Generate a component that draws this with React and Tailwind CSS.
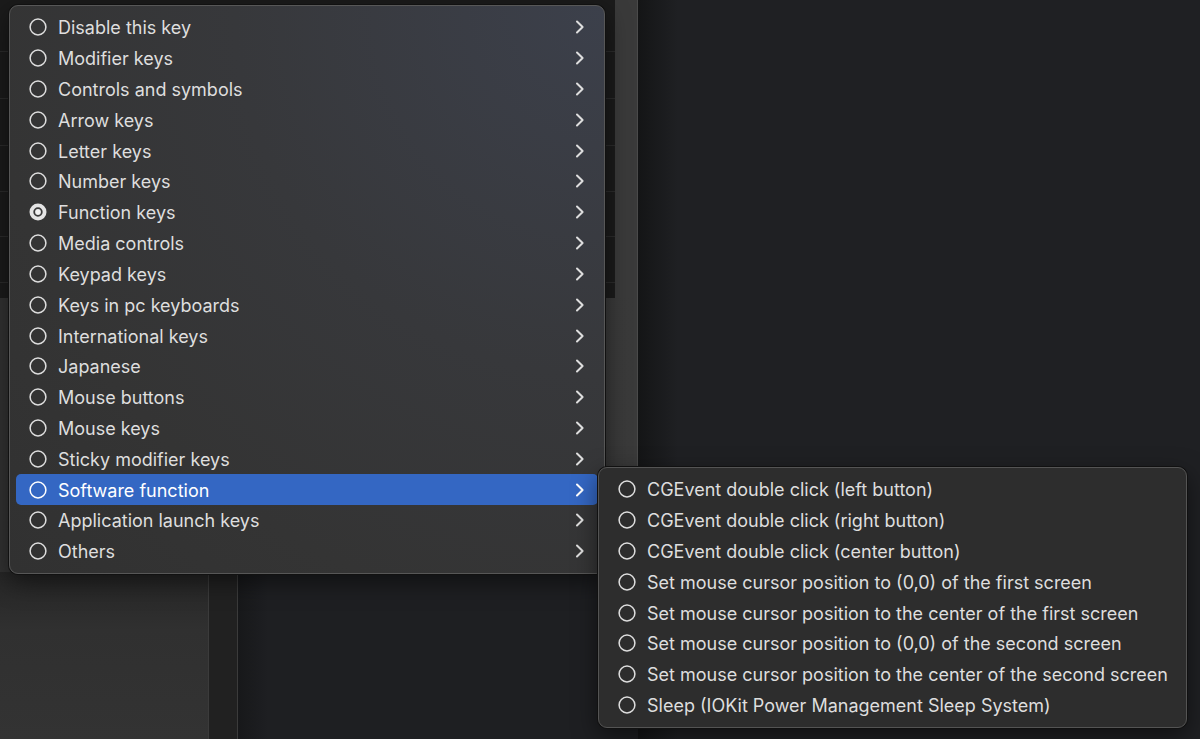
import React from "react";

const font = { fontFamily: "Inter, 'Noto Sans', 'Liberation Sans', sans-serif" };

const categories = [
  "Disable this key",
  "Modifier keys",
  "Controls and symbols",
  "Arrow keys",
  "Letter keys",
  "Number keys",
  "Function keys",
  "Media controls",
  "Keypad keys",
  "Keys in pc keyboards",
  "International keys",
  "Japanese",
  "Mouse buttons",
  "Mouse keys",
  "Sticky modifier keys",
  "Software function",
  "Application launch keys",
  "Others",
];

const softwareFunctions = [
  "CGEvent double click (left button)",
  "CGEvent double click (right button)",
  "CGEvent double click (center button)",
  "Set mouse cursor position to (0,0) of the first screen",
  "Set mouse cursor position to the center of the first screen",
  "Set mouse cursor position to (0,0) of the second screen",
  "Set mouse cursor position to the center of the second screen",
  "Sleep (IOKit Power Management Sleep System)",
];

const Radio = ({ checked }) => (
  <svg width="18" height="18" viewBox="0 0 18 18" className="shrink-0">
    {checked ? (
      <>
        <circle cx="9" cy="9" r="8.5" fill="#e4e4e4" />
        <circle cx="9" cy="9" r="3.8" fill="none" stroke="#3a3a3a" strokeWidth="1.8" />
        <circle cx="9" cy="9" r="2.4" fill="#f2f2f2" />
      </>
    ) : (
      <circle cx="9" cy="9" r="7.9" fill="none" stroke="currentColor" strokeWidth="1.5" />
    )}
  </svg>
);

const Chevron = () => (
  <svg width="10" height="14" viewBox="0 0 10 14" className="shrink-0">
    <path
      d="M2 1.5 L7.6 7 L2 12.5"
      fill="none"
      stroke="currentColor"
      strokeWidth="2"
      strokeLinecap="round"
      strokeLinejoin="round"
    />
  </svg>
);

const MenuRow = ({ label, checked, active, arrow }) => (
  <div
    className={`flex h-[30.82px] items-center gap-[11px] rounded-[5px] pl-[13px] pr-[13px] ${
      active ? "bg-[#3467c3] text-white" : "text-[#dedede]"
    }`}
  >
    <Radio checked={checked} />
    <span className="flex-1 whitespace-nowrap pt-[2px] text-[18px] leading-none">{label}</span>
    {arrow && <Chevron />}
  </div>
);

export default function App() {
  return (
    <div className="relative flex h-[739px] w-[1200px] overflow-hidden bg-[#1f2023]" style={font}>
      {/* window behind the menu */}
      <div className="flex w-[638px] flex-col">
        <div className="flex h-[298px]">
          <div className="flex w-[615px] flex-col bg-[#1b1b1b]">
            <div className="h-[52px] border-b border-[#2b2b2b]" />
            <div className="h-[47px] border-b border-[#2b2b2b]" />
            <div className="h-[47px] border-b border-[#2b2b2b]" />
            <div className="h-[46px] border-b border-[#2b2b2b]" />
            <div className="h-[45px] border-b border-[#2b2b2b]" />
            <div className="h-[46px] border-b border-[#2b2b2b]" />
          </div>
          <div className="flex-1 border-r border-[#4a4a4a] bg-[#3a3a3a]" />
        </div>
        <div className="h-[274px] border-r border-[#4a4a4a] bg-[linear-gradient(to_right,#323232,#3a3a3a)]" />
        <div className="flex flex-1">
          <div className="w-[208px] bg-[linear-gradient(to_bottom,#262626,#303030_35%,#333333)]" />
          <div className="w-[30px] border-x border-[#3b3b3b] bg-[#212121]" />
          <div className="flex-1 bg-[linear-gradient(to_right,#17181a,#1e1f22_30px)]" />
        </div>
      </div>
      <div className="flex-1 bg-[linear-gradient(to_right,#141516,#1f2023_40px)]" />

      {/* main popup menu */}
      <div className="absolute left-[9px] top-[5px] w-[596px] rounded-[9px] border border-[#575757] bg-[radial-gradient(circle_at_100%_0%,#3c404b,#37383b_45%,#343434_75%,#313131)] px-[6px] py-[6px] shadow-[0_0_0_1px_#111,0_8px_24px_rgba(0,0,0,0.5)]">
        {categories.map((c) => (
          <MenuRow
            key={c}
            label={c}
            checked={c === "Function keys"}
            active={c === "Software function"}
            arrow
          />
        ))}
      </div>

      {/* submenu */}
      <div className="absolute left-[598px] top-[467px] w-[589px] rounded-[9px] border border-[#545454] bg-[#2d2d2d] px-[6px] py-[6px] shadow-[0_0_0_1px_#111,0_8px_24px_rgba(0,0,0,0.5)]">
        {softwareFunctions.map((s) => (
          <MenuRow key={s} label={s} />
        ))}
      </div>
    </div>
  );
}
